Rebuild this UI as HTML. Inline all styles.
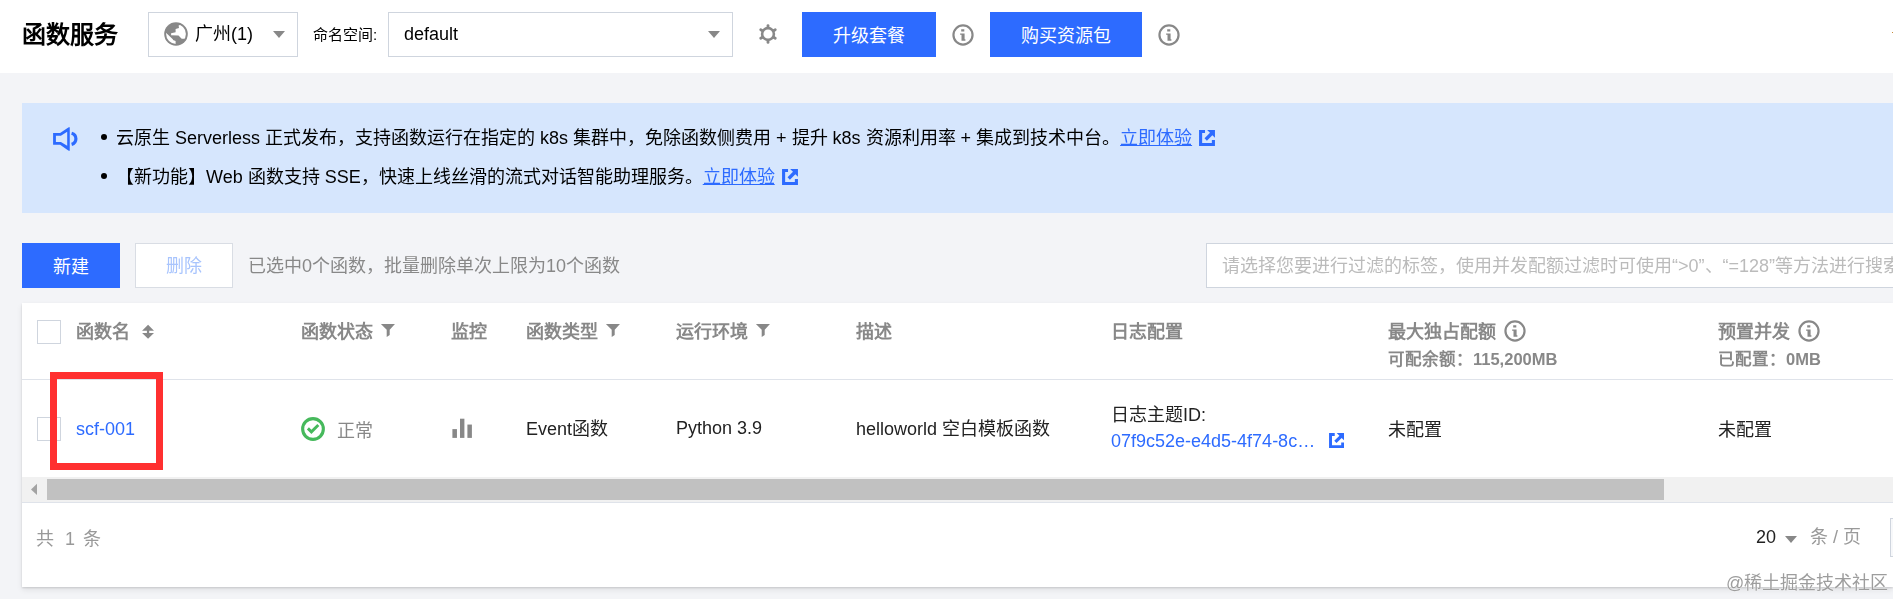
<!DOCTYPE html>
<html lang="zh-CN"><head><meta charset="utf-8">
<style>
*{margin:0;padding:0;box-sizing:border-box}
html,body{width:1893px;height:599px;overflow:hidden;background:#f3f4f7;font-family:"Liberation Sans",sans-serif;}
.a{position:absolute;white-space:nowrap;will-change:transform}
#hdr{position:absolute;left:0;top:0;width:1893px;height:73px;background:#fff}
.box{position:absolute;background:#fff;border:1px solid #cfd5de}
.btn{position:absolute;background:#2d6bff;color:#fff;font-size:18px;line-height:48px;text-align:center}
.t18{font-size:18px;line-height:24px}
.hd{font-size:18px;font-weight:bold;color:#888;line-height:24px}
.tri{position:absolute;width:0;height:0;border-left:6px solid transparent;border-right:6px solid transparent;border-top:7px solid #888}
.cb{position:absolute;width:24px;height:24px;border:1px solid #cfd5de;background:#fff}
</style></head><body>
<div id="hdr">
  <div class="a" style="left:22px;top:20px;font-size:24px;font-weight:bold;line-height:30px;color:#000">函数服务</div>
  <div class="box" style="left:148px;top:12px;width:150px;height:45px"></div>
  <svg class="a" style="left:164px;top:22px" width="24" height="24" viewBox="0 0 24 24"><defs><clipPath id="gc"><circle cx="12" cy="12" r="9.9"/></clipPath></defs><circle cx="12" cy="12" r="11.8" fill="#888"/><g clip-path="url(#gc)" fill="#fff"><path d="M14.6 3.5 L15 5.9 L11.6 7 L11.6 10.2 L7.1 11.2 L7.1 13.2 L14.5 13.4 L17.7 16.8 L24 16.8 L24 0 Z"/><path d="M0 9 L2.5 11.2 L9 17.4 L9 18 L11.6 19 L11.6 24 L0 24 Z"/></g></svg>
  <div class="a t18" style="left:195px;top:22px;color:#000">广州(1)</div>
  <div class="tri" style="left:273px;top:31px"></div>
  <div class="a" style="left:313px;top:25px;font-size:15px;line-height:20px;color:#000">命名空间:</div>
  <div class="box" style="left:388px;top:12px;width:345px;height:45px"></div>
  <div class="a t18" style="left:404px;top:22px;color:#000">default</div>
  <div class="tri" style="left:708px;top:31px"></div>
  <svg class="a" style="left:756px;top:22px" width="24" height="24" viewBox="0 0 24 24"><g stroke="#888" stroke-width="2.8" stroke-linecap="round"><line x1="12" y1="3.6" x2="12" y2="20.4"/><line x1="12" y1="3.6" x2="12" y2="20.4" transform="rotate(60 12 12)"/><line x1="12" y1="3.6" x2="12" y2="20.4" transform="rotate(120 12 12)"/></g><circle cx="12" cy="12" r="5.9" fill="#fff" stroke="#888" stroke-width="2.6"/></svg>
  <div class="btn" style="left:802px;top:12px;width:134px;height:45px">升级套餐</div>
  <svg class="a" style="left:952px;top:24px" width="22" height="22" viewBox="0 0 22 22"><circle cx="11" cy="11" r="9.55" fill="none" stroke="#888" stroke-width="2.2"/><path d="M9.2 5.2h3.1v2.4H9.2z M8.1 9.5h4.5v5.7h0.8v1.5h-3.9V10.8H8.1z" fill="#888"/></svg>
  <div class="btn" style="left:990px;top:12px;width:152px;height:45px">购买资源包</div>
  <svg class="a" style="left:1158px;top:24px" width="22" height="22" viewBox="0 0 22 22"><circle cx="11" cy="11" r="9.55" fill="none" stroke="#888" stroke-width="2.2"/><path d="M9.2 5.2h3.1v2.4H9.2z M8.1 9.5h4.5v5.7h0.8v1.5h-3.9V10.8H8.1z" fill="#888"/></svg>
  <div class="a" style="left:1892px;top:32px;width:1px;height:1px;background:#c98a3a"></div>
</div>

<!-- banner -->
<div class="a" style="left:22px;top:103px;width:1871px;height:110px;background:#d6e6fd"></div>
<svg class="a" style="left:46px;top:120px" width="38" height="36" viewBox="0 0 38 36"><path fill-rule="evenodd" fill="#2d6bff" d="M7.1 12.9H14.1L21.2 8.2 22.8 7.2H23.75V30.7H22.8L21.2 29.7 14.1 24.8H7.1Z M9.9 15.8V21.9H14.9L21.2 25.8V11.7L14.9 15.8Z"/><path d="M25.6 13.2A5.8 5.8 0 0 1 25.6 24.4" fill="none" stroke="#2d6bff" stroke-width="3.2"/></svg>
<div class="a" style="left:101px;top:134px;width:6px;height:6px;border-radius:3px;background:#000"></div>
<div class="a" style="left:101px;top:173px;width:6px;height:6px;border-radius:3px;background:#000"></div>
<div class="a t18" style="left:116px;top:126px;color:#000">云原生 Serverless 正式发布，支持函数运行在指定的 k8s 集群中，免除函数侧费用 + 提升 k8s 资源利用率 + 集成到技术中台。<span style="color:#2d6bff;text-decoration:underline">立即体验</span></div>
<svg class="a" style="left:1199px;top:130px" width="16" height="16" viewBox="0 0 15.4 15.5"><path fill="#2d6bff" d="M0 0H5.8V3H3V12.5H12.4V9.6H15.4V15.5H0Z M7.8 0H15.4V7.5L12.9 5 7.6 10.3 5.3 8 10.6 2.7Z"/></svg>
<div class="a t18" style="left:116px;top:165px;color:#000">【新功能】Web 函数支持 SSE，快速上线丝滑的流式对话智能助理服务。<span style="color:#2d6bff;text-decoration:underline">立即体验</span></div>
<svg class="a" style="left:782px;top:169px" width="16" height="16" viewBox="0 0 15.4 15.5"><path fill="#2d6bff" d="M0 0H5.8V3H3V12.5H12.4V9.6H15.4V15.5H0Z M7.8 0H15.4V7.5L12.9 5 7.6 10.3 5.3 8 10.6 2.7Z"/></svg>

<!-- toolbar -->
<div class="btn" style="left:22px;top:243px;width:98px;height:45px">新建</div>
<div class="a" style="left:135px;top:243px;width:98px;height:45px;background:#fff;border:1px solid #d9dde4;color:#a8c4fd;font-size:18px;line-height:45px;text-align:center">删除</div>
<div class="a t18" style="left:248px;top:254px;color:#888">已选中0个函数，批量删除单次上限为10个函数</div>
<div class="box" style="left:1206px;top:243px;width:700px;height:45px;overflow:hidden"></div>
<div class="a t18" style="left:1222px;top:254px;color:#bbb">请选择您要进行过滤的标签，使用并发配额过滤时可使用“>0”、“=128”等方法进行搜索</div>

<!-- table -->
<div class="a" style="left:22px;top:303px;width:1871px;height:284px;background:#fff;box-shadow:0 1px 2px rgba(0,0,0,0.14),0 3px 6px rgba(0,0,0,0.08)"></div>
<div class="a" style="left:22px;top:379px;width:1871px;height:1px;background:#dfe3ea"></div>
<div class="cb" style="left:37px;top:320px"></div>
<div class="a hd" style="left:76px;top:320px">函数名</div>
<div class="a hd" style="left:301px;top:320px">函数状态</div>
<div class="a hd" style="left:451px;top:320px">监控</div>
<div class="a hd" style="left:526px;top:320px">函数类型</div>
<div class="a hd" style="left:676px;top:320px">运行环境</div>
<div class="a hd" style="left:856px;top:320px">描述</div>
<div class="a hd" style="left:1111px;top:320px">日志配置</div>
<div class="a hd" style="left:1388px;top:320px">最大独占配额</div>
<div class="a hd" style="left:1388px;top:347px;font-size:16.5px">可配余额：115,200MB</div>
<div class="a hd" style="left:1718px;top:320px">预置并发</div>
<div class="a hd" style="left:1718px;top:347px;font-size:16.5px">已配置：0MB</div>

<svg class="a" style="left:136px;top:318px" width="24" height="28" viewBox="0 0 24 28"><path fill="#888" d="M12.07 6.78L18 12.63H13.2V15H18L12.07 20.8 6.08 15H10.9V12.63H6.08Z"/></svg><svg class="a" style="left:376px;top:318px" width="24" height="28" viewBox="0 0 24 28"><path fill="#888" d="M4.9 6H18.95L13.7 11.7V17.1L10.7 19V11.7Z"/></svg><svg class="a" style="left:601px;top:318px" width="24" height="28" viewBox="0 0 24 28"><path fill="#888" d="M4.9 6H18.95L13.7 11.7V17.1L10.7 19V11.7Z"/></svg><svg class="a" style="left:751px;top:318px" width="24" height="28" viewBox="0 0 24 28"><path fill="#888" d="M4.9 6H18.95L13.7 11.7V17.1L10.7 19V11.7Z"/></svg><svg class="a" style="left:1504px;top:320px" width="22" height="22" viewBox="0 0 22 22"><circle cx="11" cy="11" r="9.55" fill="none" stroke="#888" stroke-width="2.2"/><path d="M9.2 5.2h3.1v2.4H9.2z M8.1 9.5h4.5v5.7h0.8v1.5h-3.9V10.8H8.1z" fill="#888"/></svg><svg class="a" style="left:1798px;top:320px" width="22" height="22" viewBox="0 0 22 22"><circle cx="11" cy="11" r="9.55" fill="none" stroke="#888" stroke-width="2.2"/><path d="M9.2 5.2h3.1v2.4H9.2z M8.1 9.5h4.5v5.7h0.8v1.5h-3.9V10.8H8.1z" fill="#888"/></svg>
<svg class="a" style="left:296px;top:412px" width="34" height="34" viewBox="0 0 34 34"><circle cx="17" cy="17" r="10.35" fill="none" stroke="#46b95c" stroke-width="3.1"/><path d="M11.9 16.4L15.4 19.9 22.3 13" fill="none" stroke="#46b95c" stroke-width="2.9"/></svg><svg class="a" style="left:446px;top:412px" width="32" height="32" viewBox="0 0 32 32"><g fill="#888"><rect x="6.4" y="17.1" width="4.55" height="8.8"/><rect x="14" y="6.7" width="4.4" height="19.2"/><rect x="21.4" y="12.55" width="4.5" height="13.35"/></g></svg><svg class="a" style="left:1328.5px;top:433.2px" width="15.2" height="15.2" viewBox="0 0 15.4 15.5"><path fill="#2d6bff" d="M0 0H5.8V3H3V12.5H12.4V9.6H15.4V15.5H0Z M7.8 0H15.4V7.5L12.9 5 7.6 10.3 5.3 8 10.6 2.7Z"/></svg>
<div class="cb" style="left:37px;top:417px"></div>
<div class="a t18" style="left:76px;top:417px;color:#2d6bff">scf-001</div>
<div class="a t18" style="left:337px;top:419px;color:#888">正常</div>
<div class="a t18" style="left:526px;top:417px;color:#222">Event函数</div>
<div class="a t18" style="left:676px;top:416px;color:#222">Python 3.9</div>
<div class="a t18" style="left:856px;top:417px;color:#222">helloworld 空白模板函数</div>
<div class="a t18" style="left:1111px;top:403px;color:#222">日志主题ID:</div>
<div class="a t18" style="left:1111px;top:429px;color:#2d6bff">07f9c52e-e4d5-4f74-8c…</div>
<div class="a t18" style="left:1388px;top:418px;color:#222">未配置</div>
<div class="a t18" style="left:1718px;top:418px;color:#222">未配置</div>

<!-- scrollbar -->
<div class="a" style="left:22px;top:477px;width:1871px;height:25px;background:#f1f1f1"></div>
<div class="a" style="left:47px;top:479px;width:1617px;height:21px;background:#c1c1c1"></div>
<div class="a" style="left:22px;top:502px;width:1871px;height:1px;background:#dfe3ea"></div>
<svg class="a" style="left:20px;top:470px" width="40" height="40" viewBox="0 0 40 40"><path d="M17 13.7V25L11 19.4Z" fill="#a3a3a3"/></svg>

<!-- footer -->
<div class="a t18" style="left:36px;top:527px;color:#999">共</div><div class="a t18" style="left:65px;top:527px;color:#999">1</div><div class="a t18" style="left:83px;top:527px;color:#999">条</div>
<div class="a t18" style="left:1756px;top:525px;color:#222">20</div>
<div class="tri" style="left:1785px;top:536px"></div>
<div class="a t18" style="left:1810px;top:525px;color:#999">条 / 页</div>

<div class="a" style="left:1890px;top:518px;width:20px;height:39px;border:1px solid #cfd5de;background:#f7f8fa"></div>
<div class="a" style="left:1726px;top:571px;font-size:18px;line-height:24px;color:rgba(105,105,105,0.65);text-shadow:0 0 1px #fff,0 0 1px #fff">@稀土掘金技术社区</div>
<!-- red box -->
<div class="a" style="left:50px;top:372px;width:113px;height:98px;border:7px solid #ff3030"></div>
</body></html>
